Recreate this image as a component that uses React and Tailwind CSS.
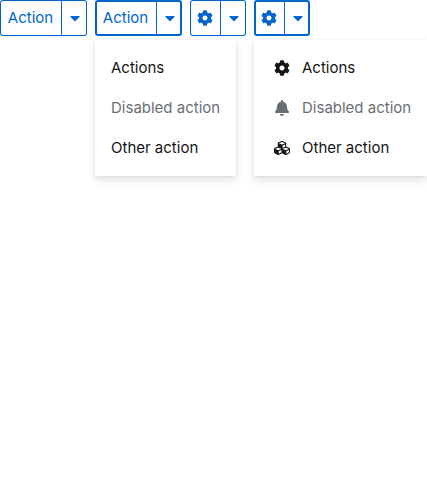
import React from "react";
import { FaBell, FaCaretDown, FaCog, FaCubes } from "react-icons/fa";

const items = [
  { label: "Actions", icon: FaCog },
  { label: "Disabled action", icon: FaBell, disabled: true },
  { label: "Other action", icon: FaCubes },
];

function Menu({ withIcons }) {
  return (
    <ul
      role="menu"
      className="absolute left-0 top-full z-10 mt-1 bg-white py-2 shadow-[0_4px_8px_0_rgba(3,3,3,0.12),0_0_4px_0_rgba(3,3,3,0.06)]"
    >
      {items.map(({ label, icon: Icon, disabled }) => (
        <li key={label} role="none">
          <button
            type="button"
            role="menuitem"
            disabled={disabled}
            className="flex w-full items-center gap-2 whitespace-nowrap px-4 py-2 text-left text-[#151515] disabled:text-[#6a6e73]"
          >
            {withIcons && (
              <span className="flex w-6 justify-center">
                <Icon aria-hidden="true" className="size-4" />
              </span>
            )}
            {label}
          </button>
        </li>
      ))}
    </ul>
  );
}

function SplitDropdown({ icon, expanded }) {
  return (
    <div className="relative shrink-0">
      <div
        className={`flex h-9 rounded-[3px] text-[#0066cc] ring-inset ring-[#0066cc] ${
          expanded ? "ring-2" : "ring-1"
        }`}
      >
        <button
          type="button"
          aria-label={icon ? "Settings" : undefined}
          className={`flex items-center justify-center ${icon ? "w-[30px]" : "w-[61px]"}`}
        >
          {icon ? <FaCog aria-hidden="true" className="size-4" /> : "Action"}
        </button>
        <button
          type="button"
          aria-label="Toggle menu"
          aria-haspopup="menu"
          aria-expanded={!!expanded}
          className="flex w-[26px] items-center justify-center border-l border-[#0066cc]"
        >
          <FaCaretDown aria-hidden="true" className="size-4" />
        </button>
      </div>
      {expanded && <Menu withIcons={icon} />}
    </div>
  );
}

export default function App() {
  return (
    <main className="flex min-h-screen items-start gap-2 overflow-hidden bg-white font-[Inter,sans-serif] text-[15px] leading-6">
      <SplitDropdown />
      <SplitDropdown expanded />
      <SplitDropdown icon />
      <SplitDropdown icon expanded />
    </main>
  );
}
